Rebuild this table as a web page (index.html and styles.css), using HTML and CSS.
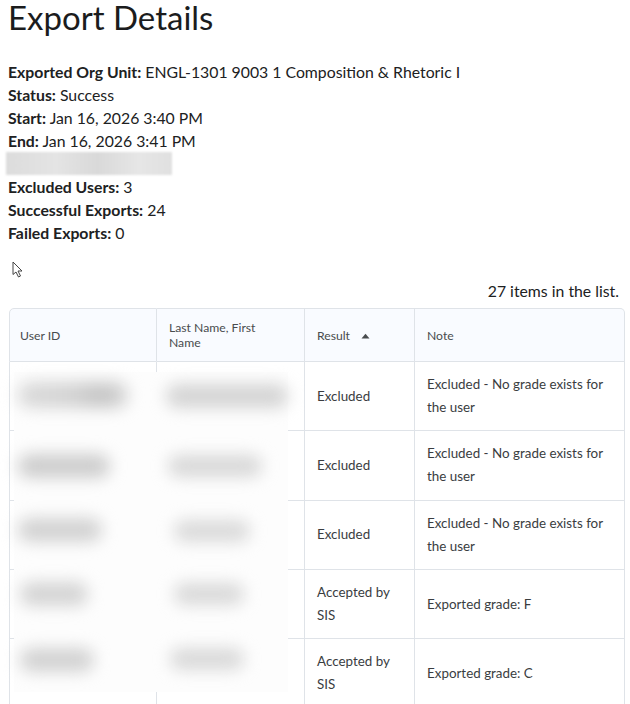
FILE: index.html
```html
<!DOCTYPE html>
<html lang="en">
<head>
<meta charset="utf-8">
<title>Export Details</title>
<link rel="stylesheet" href="styles.css">
</head>
<body>
<h1 class="title">Export Details</h1>
<div class="info">
  <div class="line"><b>Exported Org Unit:</b> ENGL-1301 9003 1 Composition &amp; Rhetoric I</div>
  <div class="line"><b>Status:</b> Success</div>
  <div class="line"><b>Start:</b> Jan 16, 2026 3:40 PM</div>
  <div class="line"><b>End:</b> Jan 16, 2026 3:41 PM</div>
  <div class="line redacted"><span class="redact-bar"></span></div>
  <div class="line"><b>Excluded Users:</b> 3</div>
  <div class="line"><b>Successful Exports:</b> 24</div>
  <div class="line"><b>Failed Exports:</b> 0</div>
  <svg class="cursor" width="11" height="17" viewBox="0 0 11 17"><path d="M1 1 L1 13.5 L4 11 L6.5 16 L8.5 15 L6 10 L10 10 Z" fill="#fff" stroke="#444" stroke-width="1" stroke-linejoin="round"/></svg>
</div>
<div class="count">27 items in the list.</div>
<div class="table-wrap">
  <table class="grid">
    <colgroup><col class="c1"><col class="c2"><col class="c3"><col class="c4"></colgroup>
    <thead>
      <tr>
        <th>User ID</th>
        <th>Last Name, First Name</th>
        <th><span class="sort">Result <svg width="9" height="6" viewBox="0 0 9 6"><path d="M0.5 5.5 L4.5 0.8 L8.5 5.5 Z" fill="#494c4e"/></svg></span></th>
        <th>Note</th>
      </tr>
    </thead>
    <tbody>
      <tr><td></td><td></td><td>Excluded</td><td>Excluded - No grade exists for the user</td></tr>
      <tr><td></td><td></td><td>Excluded</td><td>Excluded - No grade exists for the user</td></tr>
      <tr><td></td><td></td><td>Excluded</td><td>Excluded - No grade exists for the user</td></tr>
      <tr><td></td><td></td><td>Accepted by SIS</td><td>Exported grade: F</td></tr>
      <tr><td></td><td></td><td>Accepted by SIS</td><td>Exported grade: C</td></tr>
    </tbody>
  </table>
  <div class="mask">
    <div class="mrow"><span class="blob b1a"></span><span class="blob b1b"></span></div>
    <div class="mrow"><span class="blob b2a"></span><span class="blob b2b"></span></div>
    <div class="mrow"><span class="blob b3a"></span><span class="blob b3b"></span></div>
    <div class="mrow"><span class="blob b4a"></span><span class="blob b4b"></span></div>
    <div class="mrow"><span class="blob b5a"></span><span class="blob b5b"></span></div>
  </div>
</div>
</body>
</html>
```

FILE: styles.css
```css
html, body {
  margin: 0;
  padding: 0;
  background: #ffffff;
}
body {
  padding: 0 5px 0 8px;
  font-family: Lato, "Open Sans", sans-serif;
  color: #202122;
  overflow: hidden;
}
.title {
  margin: 0;
  font-size: 33px;
  font-weight: 400;
  line-height: 34px;
  color: #1b1c1d;
}
.info {
  position: relative;
  margin-top: 26px;
  font-size: 15.8px;
  line-height: 23px;
}
.info b {
  font-weight: 700;
}
.redacted {
  display: flow-root;
  height: 23px;
}
.redact-bar {
  display: block;
  width: 166px;
  height: 23px;
  margin-left: -2px;
  background: linear-gradient(90deg, #dcdcdc 0%, #e4e4e4 30%, #d9d9d9 55%, #e6e6e6 80%, #e0e0e0 100%);
  filter: blur(1px);
}
.cursor {
  position: absolute;
  left: 4px;
  top: 201px;
}
.count {
  margin-top: 35px;
  text-align: right;
  padding-right: 6px;
  font-size: 15.8px;
  line-height: 23px;
}
.table-wrap {
  position: relative;
  margin-top: 6px;
  margin-left: 1px;
  width: 616px;
}
.grid {
  width: 616px;
  border-collapse: separate;
  border-spacing: 0;
  table-layout: fixed;
}
.c1 { width: 148px; }
.c2 { width: 148px; }
.c3 { width: 110px; }
.c4 { width: 210px; }
.grid th, .grid td {
  text-align: left;
  vertical-align: middle;
  border-right: 1px solid #dfe3e8;
  border-bottom: 1px solid #dfe3e8;
  padding: 0 12px 0 12px;
}
.grid th:first-child, .grid td:first-child {
  border-left: 1px solid #dfe3e8;
  padding-left: 10px;
}
.grid th {
  background: #f9fbff;
  border-top: 1px solid #dfe3e8;
  font-size: 12.2px;
  font-weight: 400;
  line-height: 15px;
  color: #494c4e;
  height: 52px;
  padding-right: 22px;
}
.grid th:first-child { border-top-left-radius: 5px; }
.grid th:last-child { border-top-right-radius: 5px; }
.sort svg {
  margin-left: 8px;
  vertical-align: 1px;
}
.grid td {
  font-size: 13.4px;
  line-height: 23px;
  color: #3a3d3f;
  height: 68.3px;
}
.mask {
  position: absolute;
  left: 5px;
  top: 64px;
  width: 274px;
  height: 320px;
  background: #fdfdfd;
  display: flex;
  flex-direction: column;
}
.mrow {
  flex: 1;
  position: relative;
}
.blob {
  position: absolute;
  background: #cfcfcf;
  border-radius: 12px;
  filter: blur(8px);
}
.b1a { left: 4px; top: 10px; width: 110px; height: 26px; background: linear-gradient(90deg,#dadada,#d2d2d2 50%,#c4c4c4 75%,#d6d6d6); }
.b1b { left: 152px; top: 12px; width: 122px; height: 24px; background: #d4d4d4; }
.b2a { left: 4px; top: 18px; width: 92px; height: 24px; background: #cdcdcd; }
.b2b { left: 154px; top: 19px; width: 94px; height: 22px; background: #d8d8d8; }
.b3a { left: 4px; top: 18px; width: 84px; height: 24px; background: #d2d2d2; }
.b3b { left: 160px; top: 20px; width: 76px; height: 22px; background: #dadada; }
.b4a { left: 6px; top: 18px; width: 68px; height: 24px; background: #d4d4d4; }
.b4b { left: 160px; top: 19px; width: 70px; height: 22px; background: #d9d9d9; }
.b5a { left: 6px; top: 20px; width: 74px; height: 24px; background: #d2d2d2; }
.b5b { left: 156px; top: 20px; width: 74px; height: 22px; background: #d9d9d9; }
```
